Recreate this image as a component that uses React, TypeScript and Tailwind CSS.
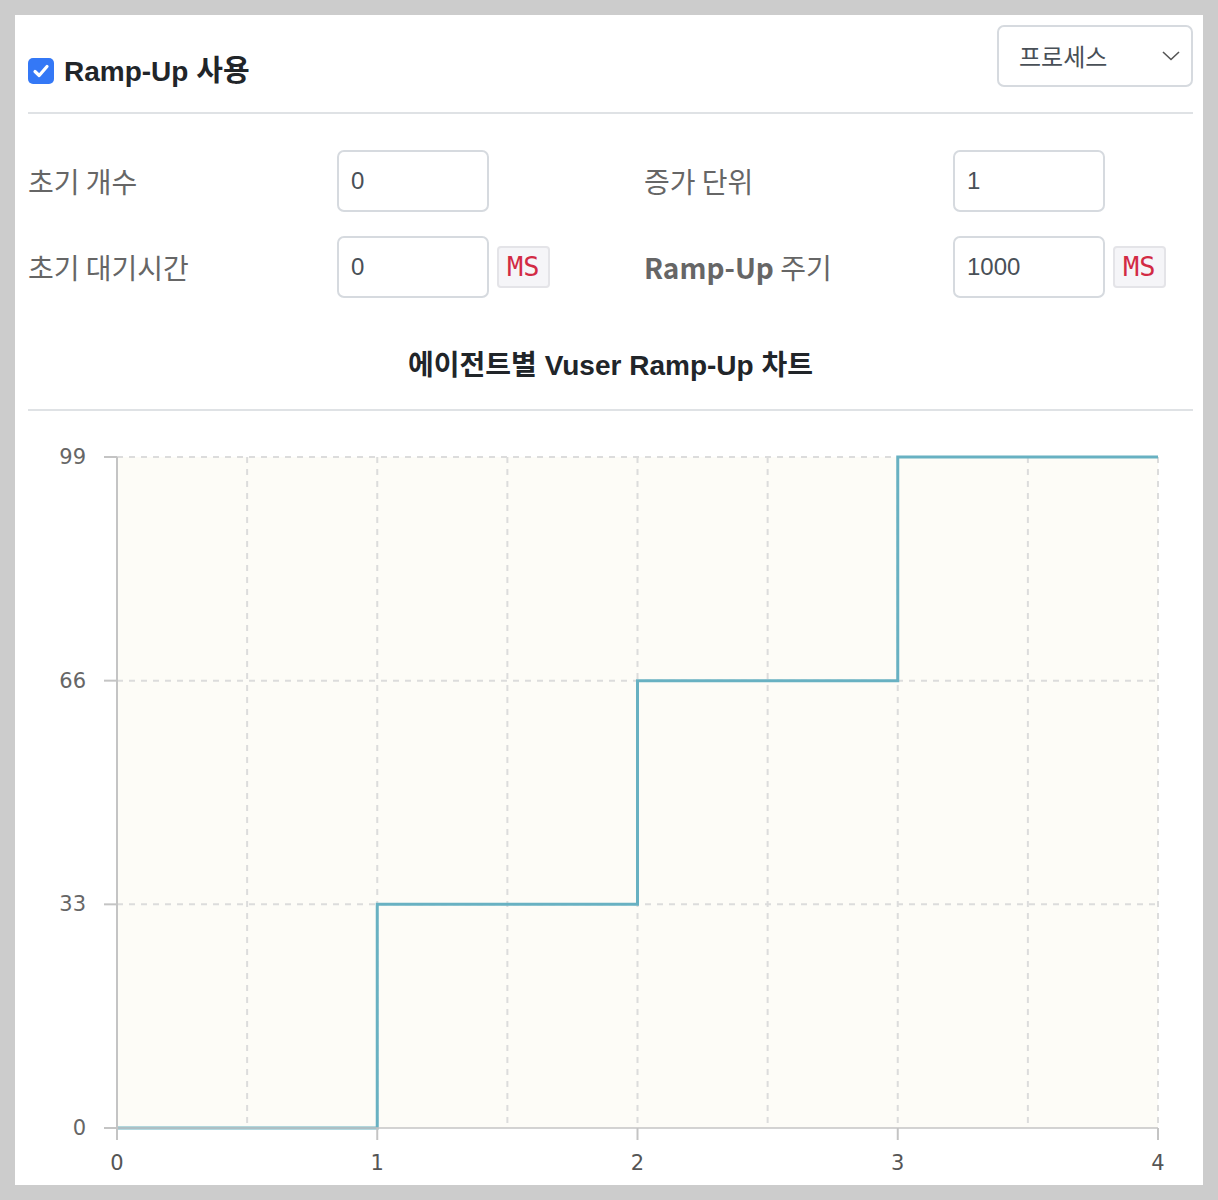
import React from "react";

const KR = { fontFamily: '"Noto Sans CJK KR", "Noto Sans", sans-serif' };
const HEAD = { fontFamily: '"Liberation Sans", "Noto Sans CJK KR", sans-serif' };

function Input({ value }: { value: string }) {
  return (
    <div
      className="w-[152px] h-[62px] border-2 border-[#d6dadf] rounded-[7px] flex items-center pl-[12px] text-[24px] text-[#495057] bg-white"
      style={HEAD}
    >
      {value}
    </div>
  );
}

function Ms() {
  return (
    <div
      className="ml-[8px] h-[42px] px-[8px] flex items-center rounded-[4px] border-2 border-[#e4e4e8] bg-[#f5f5f8] text-[#d22a44] text-[27px]"
      style={{ fontFamily: '"DejaVu Sans Mono", monospace' }}
    >
      MS
    </div>
  );
}

function Chart() {
  const W = 1165;
  const H = 774;
  const x0 = 89;
  const x1 = 1130;
  const yTop = 46;
  const yBot = 717;
  const xs = [0, 1, 2, 3, 4, 5, 6, 7, 8].map((i) => x0 + (i * (x1 - x0)) / 8);
  const yVals = [99, 66, 33, 0];
  const yOf = (v: number) => yBot - ((yBot - yTop) * v) / 99;
  const stepX = [0, 1, 2, 3, 4].map((i) => x0 + (i * (x1 - x0)) / 4);
  const pts = [
    [stepX[0], yOf(0)],
    [stepX[1], yOf(0)],
    [stepX[1], yOf(33)],
    [stepX[2], yOf(33)],
    [stepX[2], yOf(66)],
    [stepX[3], yOf(66)],
    [stepX[3], yOf(99)],
    [stepX[4], yOf(99)],
  ];
  return (
    <svg width={W} height={H} viewBox={`0 0 ${W} ${H}`} className="block">
      <rect x={x0} y={yTop} width={x1 - x0} height={yBot - yTop} fill="#fdfcf7" />
      {xs.slice(1).map((x, i) => (
        <line key={"v" + i} x1={x} x2={x} y1={yTop} y2={yBot} stroke="#dcdcdc" strokeWidth={2} strokeDasharray="6 6" />
      ))}
      {[99, 66, 33].map((v) => (
        <line key={"h" + v} x1={x0} x2={x1} y1={yOf(v)} y2={yOf(v)} stroke="#dcdcdc" strokeWidth={2} strokeDasharray="6 6" />
      ))}
      <polyline
        points={pts.map((p) => p.join(",")).join(" ")}
        fill="none"
        stroke="#68b1c2"
        strokeWidth={3}
      />
      <line x1={x0} x2={x0} y1={yTop} y2={yBot} stroke="#c4c4c4" strokeWidth={2} />
      <line x1={x0 - 13} x2={x1} y1={yBot} y2={yBot} stroke="#c4c4c4" strokeWidth={2} strokeOpacity={0.75} />
      {yVals.map((v) => (
        <g key={"yl" + v}>
          <line x1={x0 - 13} x2={x0} y1={yOf(v)} y2={yOf(v)} stroke="#c4c4c4" strokeWidth={2} />
          <text
            x={58}
            y={yOf(v) + 7}
            textAnchor="end"
            fontSize={21}
            fill="#666"
            fontFamily="DejaVu Sans, sans-serif"
          >
            {v}
          </text>
        </g>
      ))}
      {stepX.map((x, i) => (
        <g key={"xl" + i}>
          <line x1={x} x2={x} y1={yBot} y2={yBot + 12} stroke="#c4c4c4" strokeWidth={2} />
          <text
            x={x}
            y={yBot + 42}
            textAnchor="middle"
            fontSize={21}
            fill="#555"
            fontFamily="DejaVu Sans, sans-serif"
          >
            {i}
          </text>
        </g>
      ))}
    </svg>
  );
}

export default function App() {
  return (
    <div className="w-[1218px] h-[1200px] bg-[#cccccc] p-[15px]">
      <div className="w-[1188px] h-[1170px] bg-white pl-[13px] pr-[10px] pt-[10px] overflow-hidden">
        <div className="flex justify-between items-start">
          <div className="mt-[33px] flex items-center gap-[10px] h-[26px]">
            <div className="w-[26px] h-[26px] rounded-[5px] bg-[#3478f6] flex items-center justify-center">
              <svg width="18" height="18" viewBox="0 0 18 18">
                <path d="M3 9.5 L7.2 13.5 L15 4.5" fill="none" stroke="white" strokeWidth="3.2" strokeLinecap="round" strokeLinejoin="round" />
              </svg>
            </div>
            <div className="text-[28px] font-bold text-[#212529] leading-none" style={HEAD}>
              Ramp-Up <span className="text-[29px]">사용</span>
            </div>
          </div>
          <div className="w-[196px] h-[62px] border-2 border-[#d6dadf] rounded-[7px] flex items-center justify-between pl-[20px] pr-[10px]">
            <span className="text-[24px] text-[#495057]" style={KR}>
              프로세스
            </span>
            <svg width="20" height="12" viewBox="0 0 20 12">
              <path d="M2 2 L10 9.5 L18 2" fill="none" stroke="#555" strokeWidth="1.6" />
            </svg>
          </div>
        </div>
        <div className="mt-[25px] h-[2px] bg-[#dfe2e5]" />

        <div className="mt-[36px] flex items-center h-[62px]">
          <div className="w-[309px] text-[28px] text-[#666]" style={KR}>
            초기 개수
          </div>
          <div className="w-[307px] flex items-center">
            <Input value="0" />
          </div>
          <div className="w-[309px] text-[28px] text-[#666]" style={KR}>
            증가 단위
          </div>
          <div className="flex items-center">
            <Input value="1" />
          </div>
        </div>

        <div className="mt-[24px] flex items-center h-[62px]">
          <div className="w-[309px] text-[28px] text-[#666]" style={KR}>
            초기 대기시간
          </div>
          <div className="w-[307px] flex items-center">
            <Input value="0" />
            <Ms />
          </div>
          <div className="w-[309px] text-[28px] text-[#666]" style={KR}>
            <span className="font-bold">Ramp-Up</span> 주기
          </div>
          <div className="flex items-center">
            <Input value="1000" />
            <Ms />
          </div>
        </div>

        <div
          className="mt-[51px] h-[34px] flex items-center justify-center text-[28px] font-bold text-[#212529]"
          style={HEAD}
        >
          에이전트별 Vuser Ramp-Up 차트
        </div>
        <div className="mt-[26px] h-[2px] bg-[#dfe2e5]" />
        <Chart />
      </div>
    </div>
  );
}
